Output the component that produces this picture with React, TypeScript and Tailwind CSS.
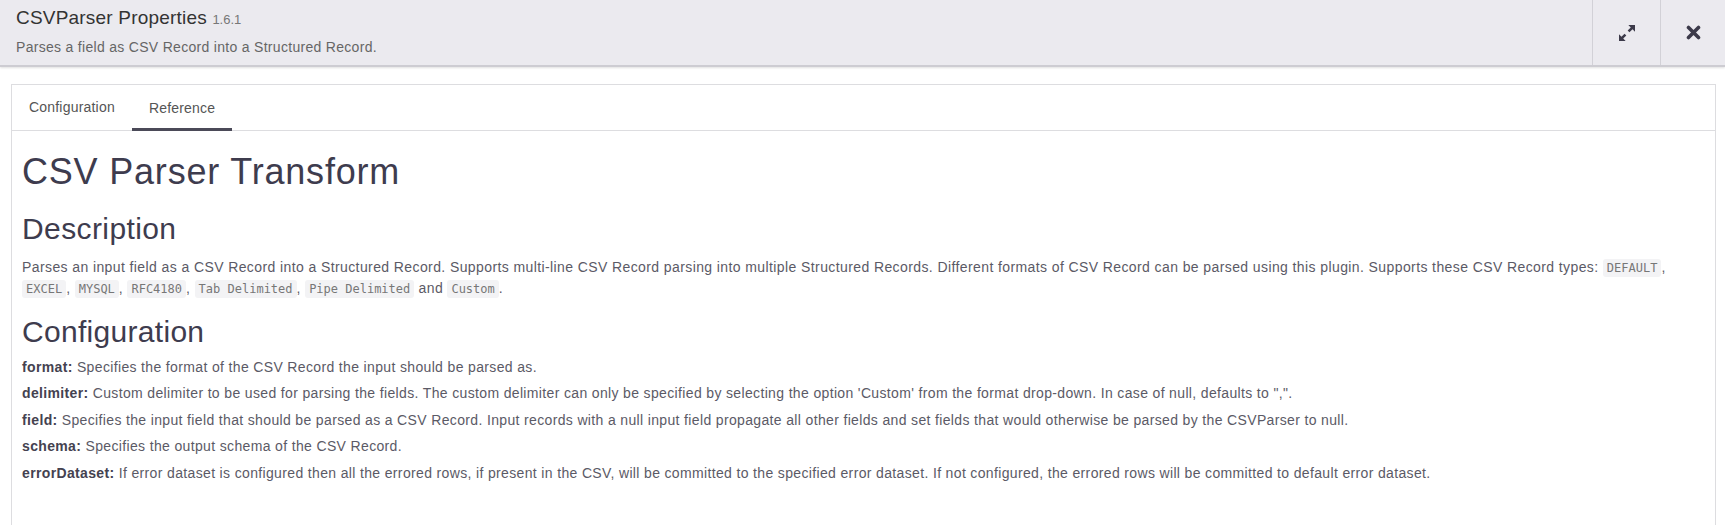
import React from "react";

const Code: React.FC<{ children: React.ReactNode }> = ({ children }) => (
  <code className="font-['DejaVu_Sans_Mono','Liberation_Mono',monospace] text-[12px] tracking-normal text-[#777] bg-[#f3f3f5] px-[4px] py-[2px] rounded-[3px]">
    {children}
  </code>
);

const configItems = [
  { label: "format:", text: "Specifies the format of the CSV Record the input should be parsed as." },
  {
    label: "delimiter:",
    text: "Custom delimiter to be used for parsing the fields. The custom delimiter can only be specified by selecting the option 'Custom' from the format drop-down. In case of null, defaults to \",\".",
  },
  {
    label: "field:",
    text: "Specifies the input field that should be parsed as a CSV Record. Input records with a null input field propagate all other fields and set fields that would otherwise be parsed by the CSVParser to null.",
  },
  { label: "schema:", text: "Specifies the output schema of the CSV Record." },
  {
    label: "errorDataset:",
    text: "If error dataset is configured then all the errored rows, if present in the CSV, will be committed to the specified error dataset. If not configured, the errored rows will be committed to default error dataset.",
  },
];

export default function App() {
  return (
    <div className="w-[1725px] h-[525px] overflow-hidden bg-white font-['Liberation_Sans',Arial,sans-serif]">
      <header className="flex h-[67px] bg-[#ebeaef] border-b-2 border-[#cdccd2] shadow-[0_1px_2px_rgba(0,0,0,0.12)]">
        <div className="flex-1 pl-[16px] pt-[7px]">
          <div className="text-[19px] leading-[22px] tracking-[0.2px] text-[#333]">
            CSVParser Properties <span className="text-[13px] tracking-normal text-[#777]">1.6.1</span>
          </div>
          <div className="mt-[7px] text-[14px] leading-[18px] tracking-[0.3px] text-[#666]">
            Parses a field as CSV Record into a Structured Record.
          </div>
        </div>
        <button className="w-[68px] flex items-center justify-center border-l border-[#d2d1d7]">
          <svg width="20" height="20" viewBox="0 0 18 18" fill="#3c3a4a">
            <path d="M10.2 1.8 H16.2 V7.8 L14 5.6 L11.2 8.4 L9.6 6.8 L12.4 4 Z" />
            <path d="M7.8 16.2 H1.8 V10.2 L4 12.4 L6.8 9.6 L8.4 11.2 L5.6 14 Z" />
          </svg>
        </button>
        <button className="w-[65px] flex items-center justify-center border-l border-[#d2d1d7]">
          <svg width="15" height="15" viewBox="0 0 15 15">
            <path d="M2.5 2.5 L12.5 12.5 M12.5 2.5 L2.5 12.5" stroke="#3c3a4a" strokeWidth="3.6" strokeLinecap="round" />
          </svg>
        </button>
      </header>

      <div className="ml-[11px] mr-[9px] mt-[17px] h-[600px] border border-[#dddde0]">
        <div className="flex h-[46px] border-b border-[#dddde0] text-[14px] tracking-[0.2px] text-[#555]">
          <div className="px-[17px] flex items-center">Configuration</div>
          <div className="px-[17px] flex items-center border-b-[3px] border-[#4b4a58] pt-[3px] -mb-px">Reference</div>
        </div>

        <div className="px-[10px] text-[#5b5a66]">
          <h1 className="mt-[21px] mb-[10px] text-[36px] leading-[1.1] tracking-[0.8px] text-[#3e3c4e]">
            CSV Parser Transform
          </h1>
          <h2 className="mt-[20px] mb-[10px] text-[30px] leading-[1.1] tracking-[0.4px] text-[#3e3c4e]">Description</h2>
          <p className="text-[14px] leading-[20px] tracking-[0.4px] mt-[12px]">
            Parses an input field as a CSV Record into a Structured Record. Supports multi-line CSV Record parsing into
            multiple Structured Records. Different formats of CSV Record can be parsed using this plugin. Supports these
            CSV Record types: <Code>DEFAULT</Code>, <Code>EXCEL</Code>, <Code>MYSQL</Code>, <Code>RFC4180</Code>,{" "}
            <Code>Tab Delimited</Code>, <Code>Pipe Delimited</Code> and <Code>Custom</Code>.
          </p>
          <h2 className="mt-[16px] mb-[10px] text-[30px] leading-[1.1] tracking-[0.3px] text-[#3e3c4e]">Configuration</h2>
          {configItems.map((item) => (
            <p key={item.label} className="text-[14px] leading-[18.5px] tracking-[0.35px] mb-[8px]">
              <strong className="font-bold text-[#444250]">{item.label}</strong> {item.text}
            </p>
          ))}
        </div>
      </div>
    </div>
  );
}
